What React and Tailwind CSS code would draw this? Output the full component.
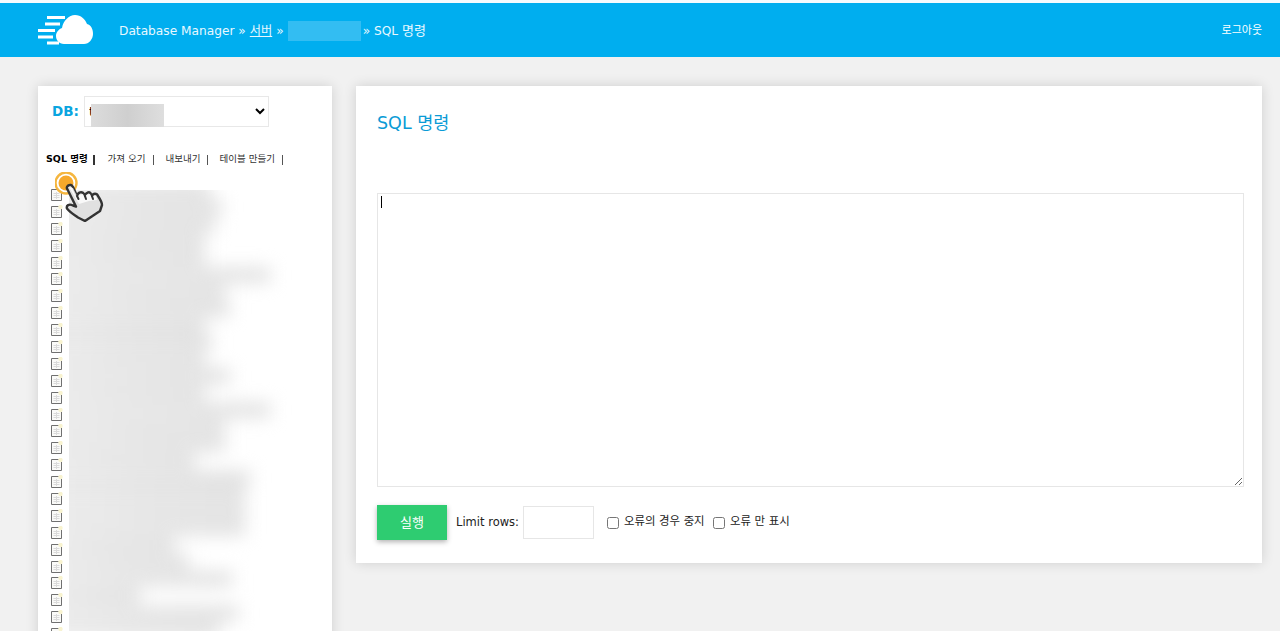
const font = { fontFamily: '"DejaVu Sans", "Noto Sans CJK KR", sans-serif' };

// right edge of each blurred table name, measured from x=69
const rows = [141, 153, 146, 136, 136, 201, 156, 161, 136, 143, 136, 161, 136, 201, 156, 156, 126, 181, 176, 176, 176, 106, 120, 163, 71, 169, 150];

function CloudLogo() {
  return (
    <svg width="56" height="30" viewBox="38 13 56 30" fill="#fff">
      <path d="M64 42c-5 0-8-4-8-8 0-4 3-7 6-8 1-7 7-13 13-13 6 0 10 4 12 9 4 1 6 5 6 10 0 5-4 10-9 10z" />
      <rect x="47" y="14" width="18" height="3" />
      <rect x="45" y="20.5" width="15" height="3" />
      <rect x="38" y="27" width="17" height="3" />
      <rect x="38" y="33.5" width="15" height="3" />
      <rect x="47" y="39.5" width="12" height="3" />
    </svg>
  );
}

function TableIcon() {
  return (
    <svg width="12" height="13" viewBox="0 0 12 13" className="shrink-0">
      <path d="M.5 1.5h7l3 2.500v8.500H.5z" fill="#fafaf8" stroke="#707070" />
      <path d="M2.500 5.500h6M2.500 7.500h6M2.500 9.500h6M5.500 4v7" stroke="#dadada" strokeWidth="1" />
      <circle cx="9.500" cy="2" r="2.200" fill="#f8f3d0" />
    </svg>
  );
}

function ClickHand() {
  return (
    <svg width="50" height="50" viewBox="55 172 50 50" className="absolute left-[17px] top-[86px]">
      <circle cx="66" cy="183" r="10.500" fill="#fff" stroke="#f5b63f" strokeWidth="2.400" />
      <circle cx="66" cy="183" r="7.500" fill="#f6a92b" />
      <path
        d="M68 186c2-2 4-1 5 1l4 9c1-4 5-5 7-2l1 2c1-4 5-5 6-2l1 2c1-3 5-3 6 0 2 3 4 6 4 9l-2 6-15 10-7-3.500c-4-3-8-5-11-9-1-3 2-5 6-3l3 1-9-18c-.5-1 0-2 1-3z"
        fill="#e0e0e0"
        stroke="#333"
        strokeWidth="2.400"
        strokeLinejoin="round"
      />
      <path d="M69 187l4 1 5 10 1-3 4-1 2 5 1-4 4-1 2 5 1-3 3 0 1 4-8 1-10 3z" fill="#fff" opacity=".8" />
      <path d="M77 196l1.500 3M85 196l1 3M92 196l1 3" stroke="#333" strokeWidth="2" fill="none" strokeLinecap="round" />
    </svg>
  );
}

function Sidebar() {
  return (
    <aside className="relative w-[294px] h-[560px] shrink-0 bg-white shadow-[0_0_12px_rgba(0,0,0,0.14)] overflow-visible">
      <div className="flex items-center pl-[14px] pt-[10px]">
        <span className="text-[13.500px] font-bold text-[#0aa5e0] w-[32px]">DB:</span>
        <div className="relative">
          <select className="w-[185px] h-[31px] bg-white border border-[#e8e8e8] text-[13px] text-black pl-0 outline-none">
            <option>t</option>
          </select>
          <div className="absolute left-[7px] top-[8px] w-[73px] h-[23px] bg-gradient-to-r from-[#dcdcdc] via-[#cfcfcf] to-[#dedede]" />
        </div>
      </div>

      <nav className="flex items-center pl-[8px] mt-[26px] h-[13px] text-[9.500px] text-[#333]">
        <span className="font-bold text-black w-[41px] whitespace-nowrap">SQL 명령</span>
        <span className="ml-[6px] w-[1.500px] h-[10px] bg-[#333]" />
        <span className="ml-[13px] w-[38px] whitespace-nowrap">가져 오기</span>
        <span className="ml-[7px] w-px h-[10px] bg-[#555]" />
        <span className="ml-[12px] w-[35px] whitespace-nowrap">내보내기</span>
        <span className="ml-[6px] w-px h-[10px] bg-[#555]" />
        <span className="ml-[12px] w-[55px] whitespace-nowrap">테이블 만들기</span>
        <span className="ml-[7px] w-px h-[10px] bg-[#555]" />
      </nav>

      <div className="flex mt-[24px] h-[441px] pl-[13px]">
        <ul className="w-[18px] shrink-0 -mt-[4px]">
          {rows.map((_, i) => (
            <li key={i} className="h-[16.900px] flex items-center">
              <TableIcon />
            </li>
          ))}
        </ul>
        <div className="flex-1 overflow-hidden">
          <div className="blur-[9px] -ml-[30px] -mt-[8px]">
            {rows.map((w, i) => (
              <div key={i} className="h-[16.900px] flex items-center">
                <div className="h-[14px] bg-gradient-to-r from-[#e9e9e9] via-[#e2e2e2] to-[#dedede]" style={{ width: w + 30 }} />
              </div>
            ))}
          </div>
        </div>
      </div>

      <ClickHand />
    </aside>
  );
}

function Editor() {
  return (
    <main className="relative w-[906px] h-[477px] bg-white shadow-[0_0_12px_rgba(0,0,0,0.14)] px-[21px] pt-[24px]">
      <h2 className="text-[17.500px] leading-[25px] text-[#0a9bd6] pt-px">SQL 명령</h2>
      <div className="relative mt-[57px]">
        <textarea className="block w-[867px] h-[294px] border border-[#e6e6e6] bg-white outline-none" />
        <span className="absolute left-[4px] top-[3px] w-px h-[12px] bg-black" />
      </div>
      <div className="flex items-center mt-[18px] text-[11.500px] text-[#222]">
        <button className="w-[70px] h-[35px] bg-[#2ecc71] text-white text-[13px] shadow-[0_2px_5px_rgba(0,0,0,0.3)]">실행</button>
        <label className="ml-[9px] w-[67px] whitespace-nowrap">Limit rows:</label>
        <input className="w-[71px] h-[33px] border border-[#e6e6e6] bg-white outline-none" />
        <input type="checkbox" className="ml-[13px] w-[12px] h-[12px] m-0" />
        <span className="ml-[5px] w-[81px] whitespace-nowrap text-[11.400px] -mt-[1px]">오류의 경우 중지</span>
        <input type="checkbox" className="ml-[8px] w-[12px] h-[12px] m-0" />
        <span className="ml-[5px] whitespace-nowrap text-[11.400px] -mt-[1px]">오류 만 표시</span>
      </div>
    </main>
  );
}

export default function App() {
  return (
    <div style={font} className="h-[631px] overflow-hidden bg-[#f1f1f1]">
      <div className="h-[3px] bg-[#f4fbfe]" />
      <header className="h-[54px] bg-[#00aeef] flex items-center pl-[38px] pr-[18px] text-white">
        <CloudLogo />
        <div className="flex items-center ml-[25px] text-[12.200px] text-[#e8f8ff] pt-[2px]">
          <span className="whitespace-nowrap">Database Manager »</span>
          <span className="ml-[4px] underline">서버</span>
          <span className="ml-[4px]">»</span>
          <span className="ml-[4px] w-[73px] h-[20px] bg-[#33bdf2]" />
          <span className="ml-[2px] whitespace-nowrap">» SQL <span className="text-[13px]">명령</span></span>
        </div>
        <span className="ml-auto text-[11px] pt-[2px]">로그아웃</span>
      </header>
      <div className="flex gap-[24px] pl-[38px] pt-[29px]">
        <Sidebar />
        <Editor />
      </div>
    </div>
  );
}
